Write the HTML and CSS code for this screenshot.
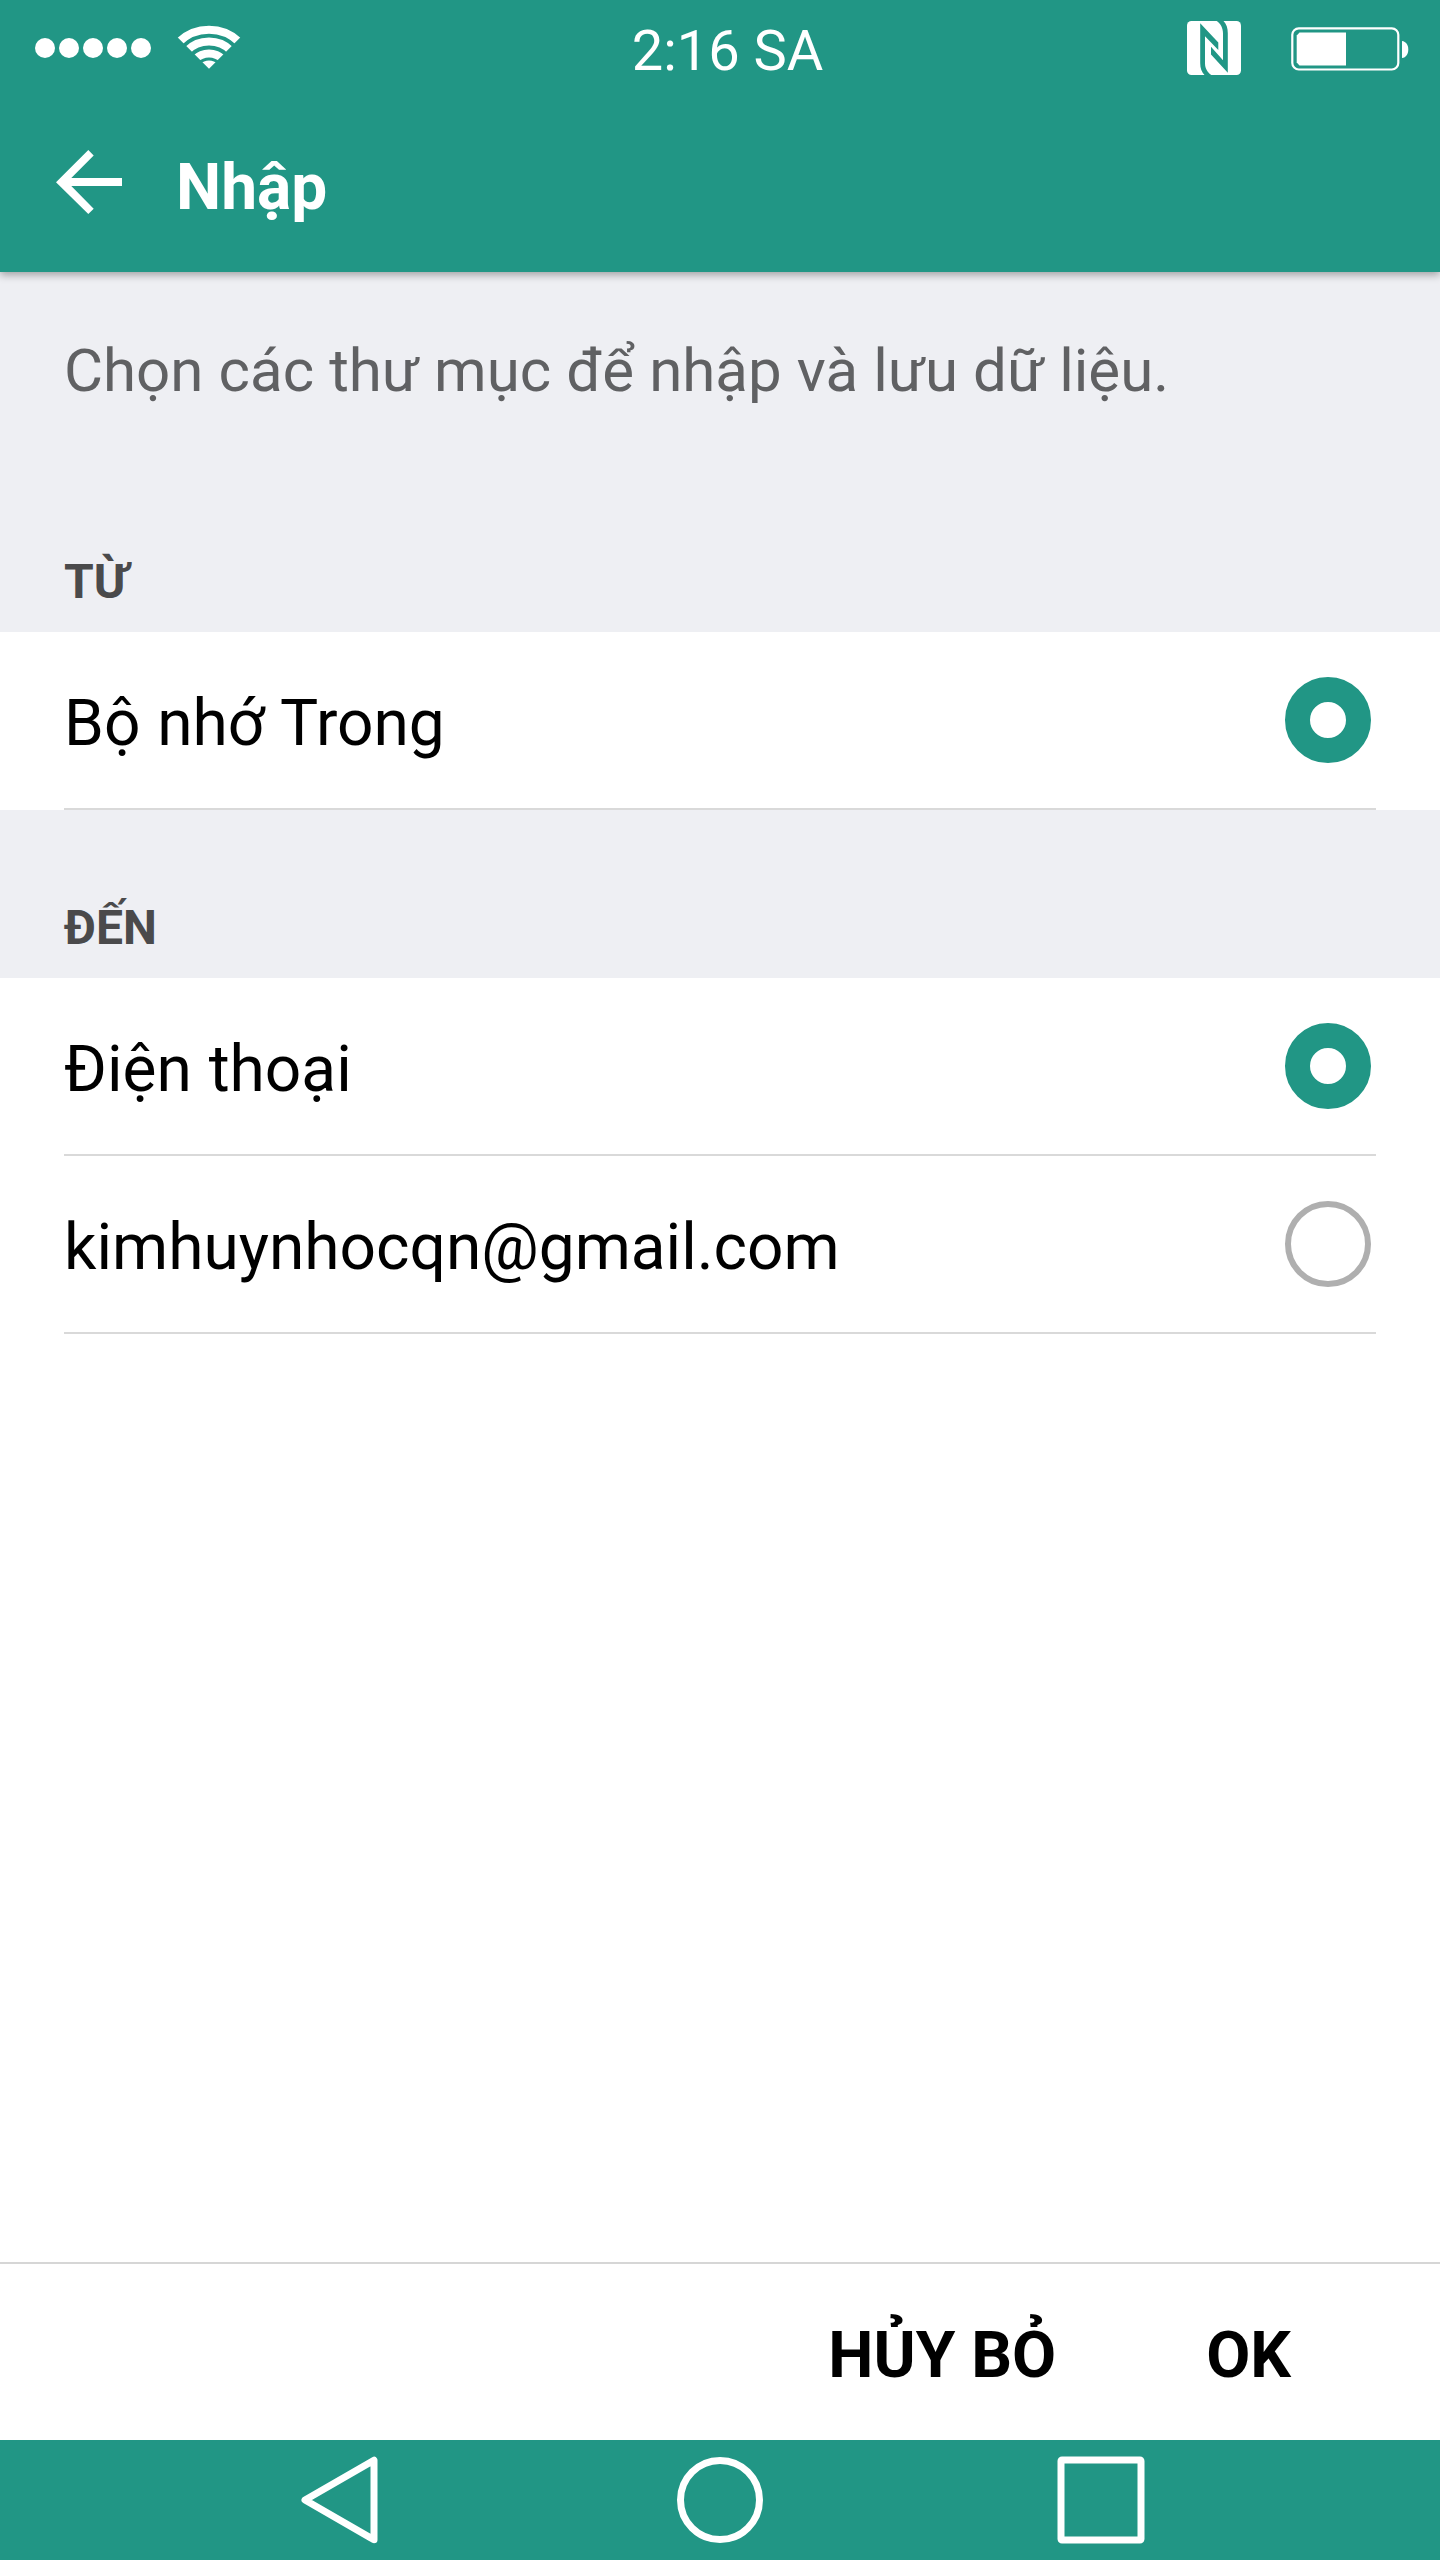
FILE: index.html
```html
<!DOCTYPE html>
<html lang="vi">
<head>
  <meta charset="UTF-8">
  <meta name="viewport" content="width=device-width, initial-scale=1">
  <title>Nhập</title>
  <link rel="stylesheet" href="styles.css">
</head>
<body>

<header class="top">
  <div class="status-bar">
    <div class="status-left">
      <div class="signal">
        <span></span><span></span><span></span><span></span><span></span>
      </div>
      <svg class="wifi" width="64" height="44" viewBox="177 24.5 64 44">
        <clipPath id="wedge"><path d="M209 68.3L165 24.3V20H253V24.3Z"/></clipPath>
        <g clip-path="url(#wedge)" fill="none" stroke="#fff" stroke-width="8">
          <circle cx="209" cy="72.5" r="43.2"/>
          <circle cx="209" cy="72.5" r="31.4"/>
          <circle cx="209" cy="72.5" r="19.6"/>
          <circle cx="209" cy="72.5" r="12.5" fill="#fff" stroke="none"/>
        </g>
      </svg>
    </div>
    <div class="clock">2:16 SA</div>
    <div class="status-right">
      <svg class="nfc" width="54" height="54" viewBox="0 0 54 54">
        <rect width="54" height="54" rx="4.5" fill="#fff"/>
        <path fill="#219685" d="M13.2 2.3L31.3 21.6V29L18 15.2V42.3C18 47.5 20.5 51.5 24.3 54H17.5C14.5 51 13.2 47 13.2 42.3Z"/>
        <path fill="#219685" d="M40.8 51.7L24 33.4V25.7L36 39.3V12.3C36 7 33.5 2.5 29.7 0H36.5C39.5 3 40.8 7 40.8 12.3Z"/>
      </svg>
      <svg class="battery" width="118" height="44" viewBox="0 0 118 44">
        <rect x="1.3" y="1.3" width="106" height="41.2" rx="6.5" fill="none" stroke="#fff" stroke-width="2.2"/>
        <path fill="#fff" d="M8.5 5.5H55V38.5H8.5L5.7 35.5V8.5Z"/>
        <path fill="#fff" d="M111 14C115 14.5 117.3 18 117.3 22.5S115 30.7 111 31Z"/>
      </svg>
    </div>
  </div>
  <div class="app-bar">
    <svg class="back" width="66" height="64" viewBox="56 150 66 64">
      <path fill="#fff" d="M88.3 150L93.7 155.4L71.3 178H122V186H71.3L93.7 208.7L88.3 214L56 182.2Z"/>
    </svg>
    <h1>Nhập</h1>
  </div>
</header>

<main>
  <p class="description">Chọn các thư mục để nhập và lưu dữ liệu.</p>

  <h2 class="section-title">TỪ</h2>
  <div class="list">
    <div class="item">
      <span class="label">Bộ nhớ Trong</span>
      <span class="radio checked"></span>
    </div>
  </div>

  <h2 class="section-title">ĐẾN</h2>
  <div class="list">
    <div class="item">
      <span class="label">Điện thoại</span>
      <span class="radio checked"></span>
    </div>
    <div class="item">
      <span class="label">kimhuynhocqn@gmail.com</span>
      <span class="radio"></span>
    </div>
  </div>
</main>

<div class="actions">
  <button>HỦY BỎ</button>
  <button>OK</button>
</div>

<nav class="nav-bar">
  <svg width="88" height="88" viewBox="0 0 88 88">
    <path d="M79 4.2V83.8L10 44Z"/>
  </svg>
  <svg width="88" height="88" viewBox="0 0 88 88">
    <circle cx="44" cy="44" r="39.5"/>
  </svg>
  <svg width="88" height="88" viewBox="0 0 88 88">
    <rect x="4" y="4" width="80" height="80" rx="1"/>
  </svg>
</nav>

</body>
</html>
```
FILE: styles.css
```css
* {
  box-sizing: border-box;
}
body {
  margin: 0;
  height: 2560px;
  display: flex;
  flex-direction: column;
  font-family: Roboto, sans-serif;
  background: #fff;
  color: #000;
}
svg {
  display: block;
}
.top {
  position: relative;
  z-index: 1;
  height: 272px;
  background: #219685;
  color: #fff;
  box-shadow: 0 3px 8px rgba(0,0,0,0.33);
}
.status-bar {
  height: 96px;
  display: grid;
  grid-template-columns: 1fr auto 1fr;
}
.status-left {
  display: flex;
  align-items: flex-start;
  padding-left: 34.7px;
}
.signal {
  display: flex;
  gap: 4.2px;
  padding-top: 38px;
  margin-right: 25.5px;
}
.signal span {
  width: 20px;
  height: 20px;
  border-radius: 50%;
  background: #fff;
}
.wifi {
  margin-top: 24.5px;
}
.clock {
  padding-left: 15px;
  font-size: 56px;
  line-height: 102px;
}
.status-right {
  display: flex;
  justify-content: flex-end;
  align-items: flex-start;
  gap: 50px;
  padding-right: 31px;
}
.nfc {
  margin-top: 21px;
}
.battery {
  margin-top: 26.5px;
}
.app-bar {
  display: flex;
  align-items: flex-start;
  padding: 54px 56px 0;
}
.app-bar h1 {
  margin: 0 0 0 54px;
  font-size: 64px;
  line-height: 76px;
  font-weight: 700;
}
main {
  flex: 1;
}
.description {
  margin: 0;
  height: 192px;
  padding: 61px 64px 0;
  font-size: 60px;
  line-height: 76px;
  word-spacing: 0.25px;
  color: #606163;
  background: #eeeff3;
}
.section-title {
  margin: 0;
  height: 168px;
  padding: 90px 64px 0;
  font-size: 48px;
  line-height: 56px;
  font-weight: 700;
  color: #4a4a4b;
  background: #eeeff3;
}
.list {
  padding: 0 64px;
}
.item {
  height: 178px;
  display: flex;
  align-items: center;
  justify-content: space-between;
  padding-right: 5px;
  border-bottom: 2px solid #d9d9d9;
}
.label {
  padding-top: 7px;
  font-size: 64px;
  line-height: 76px;
  word-spacing: 1px;
}
.radio {
  width: 86px;
  height: 86px;
  border: 6px solid #afafaf;
  border-radius: 50%;
}
.radio.checked {
  border: 25px solid #219685;
}
.actions {
  height: 178px;
  display: flex;
  justify-content: flex-end;
  align-items: flex-start;
  gap: 150px;
  padding: 54px 149px 0 0;
  border-top: 2px solid #d6d6d6;
}
.actions button {
  padding: 0;
  border: none;
  background: none;
  color: #000;
  font-family: inherit;
  font-size: 64px;
  line-height: 76px;
  font-weight: 700;
}
.nav-bar {
  height: 120px;
  display: flex;
  justify-content: center;
  align-items: center;
  gap: 293px;
  background: #219685;
}
.nav-bar svg {
  fill: none;
  stroke: #fff;
  stroke-width: 7;
  stroke-linejoin: round;
}
```
